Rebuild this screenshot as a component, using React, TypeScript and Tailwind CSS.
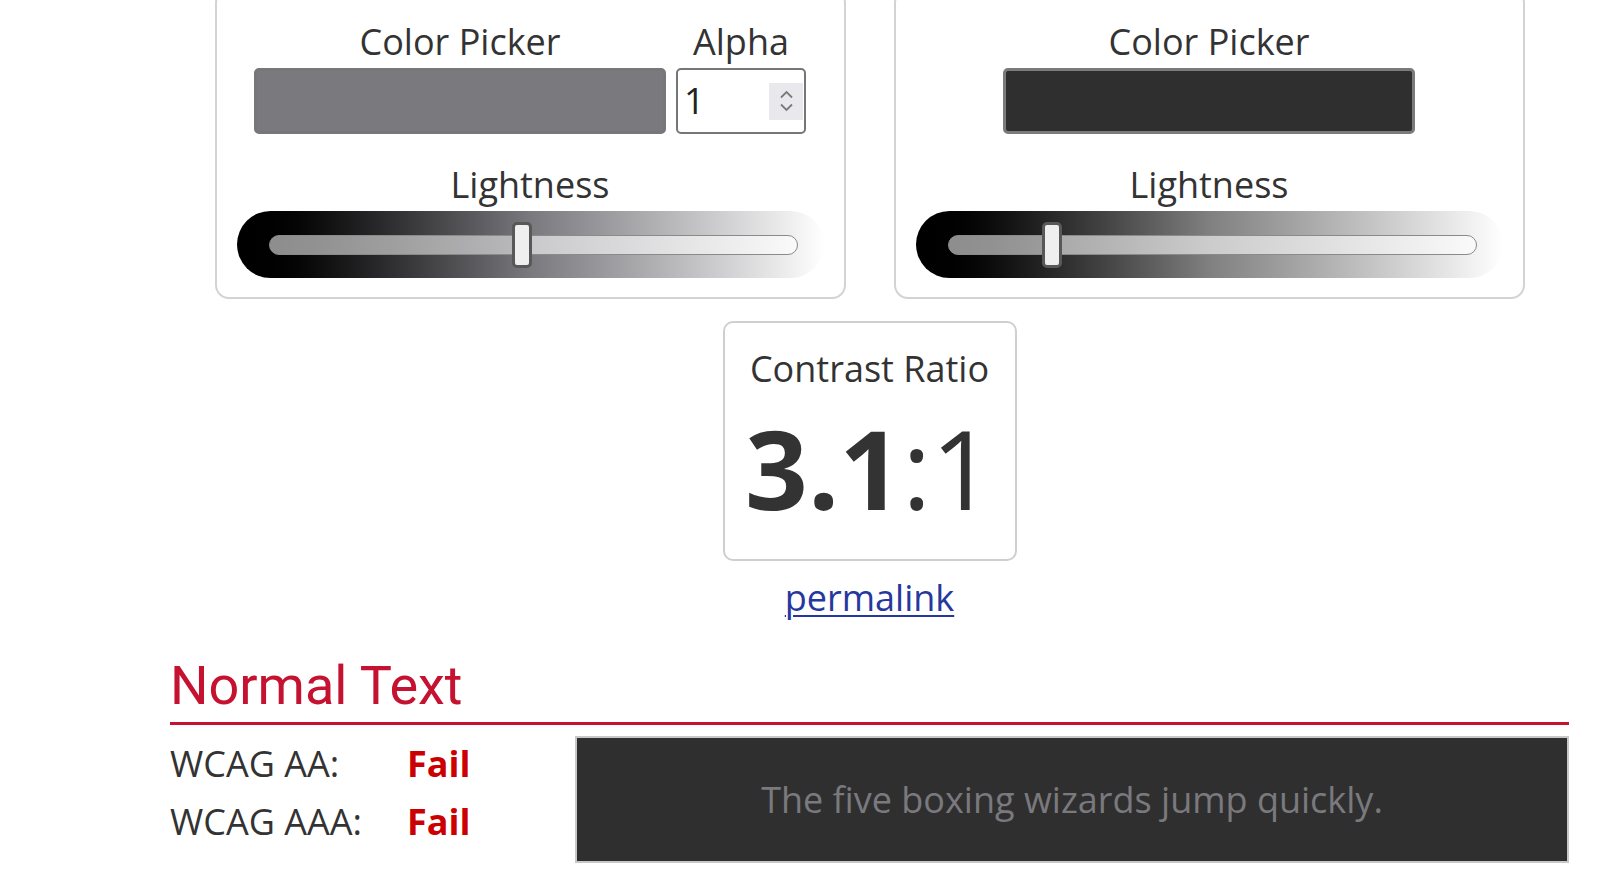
import React from "react";

const sans = "font-['Open_Sans','Noto_Sans',sans-serif]";

interface SliderProps {
  value: number;
  gradient: string;
}

function LightnessSlider({ value, gradient }: SliderProps) {
  return (
    <div
      className={`mx-[20px] mt-[4px] flex h-[67px] items-center rounded-full pl-[32px] pr-[26px] ${gradient}`}
    >
      <div className="relative h-[20px] flex-1 rounded-full border-[1.5px] border-[#8a8a8a] bg-white/60">
        <div
          className="absolute inset-y-0 left-0 rounded-l-full bg-black/[0.07]"
          style={{ width: `${value * 100}%` }}
        />
        <div
          className="absolute top-[-14px] h-[46px] w-[20px] -translate-x-1/2 rounded-[5px] border-[3px] border-[#585858] bg-[#efefef]"
          style={{ left: `${value * 100}%` }}
        />
      </div>
    </div>
  );
}

function Label({ children }: { children: React.ReactNode }) {
  return (
    <div className="text-center text-[36px] leading-[44px] text-[#333]">
      {children}
    </div>
  );
}

function AlphaInput() {
  return (
    <div className="mt-[4px] flex h-[66px] w-[130px] items-center rounded-[5px] border-2 border-[#767676] bg-white pl-[6px] pr-[1px]">
      <span className="flex-1 text-[36px] leading-none text-[#222]">1</span>
      <div className="flex h-[37px] w-[34px] flex-col items-center justify-center gap-[4px] bg-[#e9e8ed]">
        <svg width="15" height="9" viewBox="0 0 15 9" fill="none">
          <path d="M2 7.5L7.5 2l5.5 5.5" stroke="#7a7a7a" strokeWidth="1.8" />
        </svg>
        <svg width="15" height="9" viewBox="0 0 15 9" fill="none">
          <path d="M2 1.5L7.5 7 13 1.5" stroke="#7a7a7a" strokeWidth="1.8" />
        </svg>
      </div>
    </div>
  );
}

function Card({ children }: { children: React.ReactNode }) {
  return (
    <div className="w-[631px] rounded-[14px] border-2 border-[#d3d3d3] pb-[19px] pt-[29px]">
      {children}
    </div>
  );
}

export default function App() {
  return (
    <div className={`${sans} min-h-screen overflow-hidden bg-white`}>
      <div className="ml-[170px] w-[1399px]">
        <div className="-mt-[11px] flex justify-center gap-[48px]">
          <Card>
            <div className="flex justify-center gap-[10px]">
              <div className="flex w-[412px] flex-col">
                <Label>Color Picker</Label>
                <div className="mt-[4px] h-[66px] rounded-[5px] border-[3px] border-[#77767b] bg-[#7a797e]" />
              </div>
              <div className="flex w-[130px] flex-col">
                <Label>Alpha</Label>
                <AlphaInput />
              </div>
            </div>
            <div className="mt-[29px]">
              <Label>Lightness</Label>
            </div>
            <LightnessSlider
              value={0.48}
              gradient="bg-linear-to-r from-black via-[#7a797e] to-white"
            />
          </Card>

          <Card>
            <div className="flex justify-center">
              <div className="flex w-[412px] flex-col">
                <Label>Color Picker</Label>
                <div className="mt-[4px] h-[66px] rounded-[5px] border-[3px] border-[#7b7b7b] bg-[#2f2f2f]" />
              </div>
            </div>
            <div className="mt-[29px]">
              <Label>Lightness</Label>
            </div>
            <LightnessSlider
              value={0.197}
              gradient="bg-linear-to-r from-black via-[#808080] to-white"
            />
          </Card>
        </div>

        <div className="mx-auto mt-[22px] h-[240px] w-[294px] rounded-[10px] border-2 border-[#cfcfcf] pt-[24px] text-center text-[#333]">
          <div className="text-[36px] leading-[44px]">Contrast Ratio</div>
          <div className="mt-[20px] text-[110px] leading-[112px]">
            <span className="font-bold">3.1</span>:1
          </div>
        </div>

        <div className="mt-[15px] text-center">
          <a
            href="#"
            className="text-[36px] leading-[44px] text-[#26389f] underline decoration-2 underline-offset-[4px]"
          >
            permalink
          </a>
        </div>

        <h2 className="mt-[39px] border-b-[3px] border-[#c41230] pb-[9px] font-['Roboto',sans-serif] text-[54px] leading-[54px] text-[#c41230]">
          Normal Text
        </h2>

        <div className="mt-[10px] flex items-start">
          <div className="w-[405px] text-[36px] leading-[58px] text-[#333]">
            <div className="flex">
              <span className="w-[237px]">WCAG AA:</span>
              <span className="font-bold text-[#cc0000]">Fail</span>
            </div>
            <div className="flex">
              <span className="w-[237px]">WCAG AAA:</span>
              <span className="font-bold text-[#cc0000]">Fail</span>
            </div>
          </div>
          <div className="mt-[1px] flex h-[127px] flex-1 items-center justify-center border-2 border-[#c8c8c8] bg-[#2f2f2f] text-[36px] text-[#7a797e]">
            The five boxing wizards jump quickly.
          </div>
        </div>
      </div>
    </div>
  );
}
